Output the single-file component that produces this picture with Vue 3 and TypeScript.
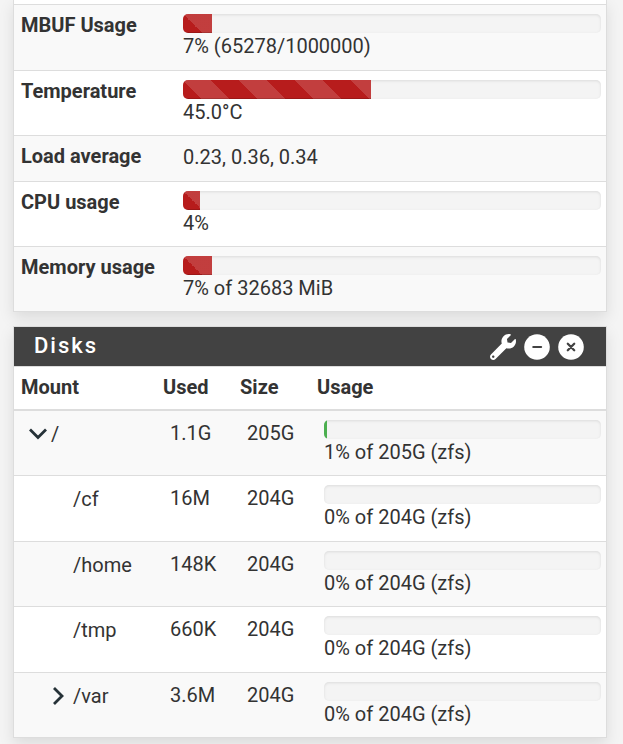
<script setup lang="ts">
import { ref, computed } from 'vue'

interface Stat {
  label: string
  text: string
  percent?: number
}

interface Mount {
  name: string
  used: string
  size: string
  percent: number
  expand?: 'open' | 'closed'
  child: boolean
}

const stats: Stat[] = [
  { label: 'MBUF Usage', text: '7% (65278/1000000)', percent: 7 },
  { label: 'Temperature', text: '45.0°C', percent: 45 },
  { label: 'Load average', text: '0.23, 0.36, 0.34' },
  { label: 'CPU usage', text: '4%', percent: 4 },
  { label: 'Memory usage', text: '7% of 32683 MiB', percent: 7 },
]

const mounts: Mount[] = [
  { name: '/', used: '1.1G', size: '205G', percent: 1, expand: 'open', child: false },
  { name: '/cf', used: '16M', size: '204G', percent: 0, child: true },
  { name: '/home', used: '148K', size: '204G', percent: 0, child: true },
  { name: '/tmp', used: '660K', size: '204G', percent: 0, child: true },
  { name: '/var', used: '3.6M', size: '204G', percent: 0, expand: 'closed', child: true },
]

const rootOpen = ref(true)
const collapsed = ref(false)
const visibleMounts = computed(() => mounts.filter((m) => rootOpen.value || !m.child))

function toggle(m: Mount) {
  if (!m.child) rootOpen.value = !rootOpen.value
}
</script>

<template>
  <main class="dashboard">
    <section class="panel system">
      <table class="grid">
        <tbody>
          <tr v-for="s in stats" :key="s.label">
            <th scope="row" class="label">{{ s.label }}</th>
            <td class="value" :class="{ plain: s.percent === undefined }">
              <div v-if="s.percent !== undefined" class="progress">
                <div class="fill striped" :style="{ width: s.percent + '%' }"></div>
              </div>
              <span>{{ s.text }}</span>
            </td>
          </tr>
        </tbody>
      </table>
    </section>

    <section class="panel disks">
      <header class="heading">
        <h2>Disks</h2>
        <div class="tools">
          <button type="button" aria-label="Settings">
            <svg viewBox="0 0 512 512">
              <path
                fill="#fff"
                d="M507.73 109.1c-2.24-9.03-13.54-12.09-20.12-5.51l-74.36 74.36-67.88-11.31-11.31-67.88 74.36-74.36c6.62-6.62 3.43-17.9-5.66-20.16-47.38-11.74-99.55.91-136.58 37.93-39.64 39.64-50.55 97.1-34.05 147.2L18.74 402.76c-24.99 24.99-24.99 65.51 0 90.5 24.99 24.99 65.51 24.99 90.5 0l213.21-213.21c50.12 16.71 107.47 5.68 147.37-34.22 37.07-37.07 49.7-89.32 37.91-136.73zM64 472c-13.25 0-24-10.75-24-24 0-13.26 10.75-24 24-24s24 10.74 24 24c0 13.25-10.75 24-24 24z"
              />
            </svg>
          </button>
          <button type="button" aria-label="Collapse" @click="collapsed = !collapsed">
            <svg viewBox="0 0 26 26">
              <circle cx="13" cy="13" r="12.8" fill="#fff" />
              <path d="M9.3 13h7.8" stroke="#424242" stroke-width="2.2" stroke-linecap="round" />
            </svg>
          </button>
          <button type="button" aria-label="Close">
            <svg viewBox="0 0 26 26">
              <circle cx="13" cy="13" r="12.8" fill="#fff" />
              <path
                d="M9.8 9.8l6.4 6.4M16.2 9.8l-6.4 6.4"
                stroke="#424242"
                stroke-width="2.3"
                stroke-linecap="round"
              />
            </svg>
          </button>
        </div>
      </header>
      <table v-if="!collapsed" class="grid">
        <colgroup>
          <col class="c-mount" />
          <col class="c-num" />
          <col class="c-num" />
          <col />
        </colgroup>
        <thead>
          <tr>
            <th scope="col">Mount</th>
            <th scope="col">Used</th>
            <th scope="col">Size</th>
            <th scope="col">Usage</th>
          </tr>
        </thead>
        <tbody>
          <tr v-for="m in visibleMounts" :key="m.name">
            <td class="mount">
              <div class="tree" :class="{ child: m.child }">
                <button
                  v-if="m.expand"
                  type="button"
                  :aria-label="'Toggle ' + m.name"
                  @click="toggle(m)"
                >
                  <svg viewBox="0 0 20 20">
                    <path
                      v-if="m.expand === 'open' && rootOpen"
                      d="M2 5.5l8 8 8-8"
                      fill="none"
                      stroke="#263238"
                      stroke-width="2.8"
                    />
                    <path
                      v-else
                      d="M6 2l8 8-8 8"
                      fill="none"
                      stroke="#263238"
                      stroke-width="2.8"
                    />
                  </svg>
                </button>
                <span v-else class="spacer"></span>
                <span>{{ m.name }}</span>
              </div>
            </td>
            <td class="num">{{ m.used }}</td>
            <td class="num">{{ m.size }}</td>
            <td class="usage">
              <div class="progress">
                <div class="fill good" :style="{ width: m.percent + '%' }"></div>
              </div>
              <span>{{ m.percent }}% of {{ m.size }} (zfs)</span>
            </td>
          </tr>
        </tbody>
      </table>
    </section>
  </main>
</template>

<style>
body {
  background: #f4f4f4;
}
</style>

<style scoped>
.dashboard {
  display: flex;
  flex-direction: column;
  gap: 14px;
  padding: 0 16px 6px 13px;
  font-family: Roboto, 'Liberation Sans', sans-serif;
  font-size: 20px;
  line-height: 26px;
  color: #333;
}

.panel {
  background: #fff;
  border: 1px solid #ddd;
  box-shadow: 0 6px 14px rgba(0, 0, 0, 0.1);
}

.system {
  border-top: 0;
  padding-top: 4px;
}

.grid {
  width: 100%;
  table-layout: fixed;
  border-collapse: separate;
  border-spacing: 0;
}

.grid th,
.grid td {
  box-sizing: border-box;
  padding: 0;
  border-top: 1px solid #ddd;
  text-align: left;
  vertical-align: top;
}

.grid th {
  font-weight: 700;
}

.grid tbody tr:nth-child(odd) {
  background: #f9f9f9;
}

.system .label {
  width: 169px;
  padding: 7px 0 12px 7px;
}

.system .value {
  height: 65px;
  padding: 9px 5px 0 0;
}

.system tr:first-child .value {
  height: 66px;
}

.system .value.plain {
  height: 46px;
  padding-top: 8px;
}

.progress {
  height: 19px;
  overflow: hidden;
  border-radius: 5px;
  background: #f4f4f4;
  box-shadow: inset 0 1px 3px rgba(0, 0, 0, 0.1);
}

.fill {
  height: 100%;
  box-shadow: inset 0 -1px 0 rgba(0, 0, 0, 0.15);
}

.striped {
  background-color: #b71c1c;
  background-image: linear-gradient(
    45deg,
    rgba(255, 255, 255, 0.15) 25%,
    transparent 25%,
    transparent 50%,
    rgba(255, 255, 255, 0.15) 50%,
    rgba(255, 255, 255, 0.15) 75%,
    transparent 75%
  );
  background-size: 56px 56px;
}

.good {
  background-color: #4caf50;
}

.heading {
  display: flex;
  align-items: center;
  justify-content: space-between;
  height: 39px;
  padding: 0 22px 0 20px;
  background: #424242;
  color: #fff;
}

.heading h2 {
  margin: 0;
  padding-bottom: 2px;
  font-size: 22px;
  font-weight: 500;
  letter-spacing: 2px;
}

.tools {
  display: flex;
  gap: 8px;
}

button {
  display: block;
  padding: 0;
  border: 0;
  background: none;
  cursor: pointer;
}

.tools button {
  width: 26px;
  height: 26px;
}

svg {
  display: block;
  width: 100%;
  height: 100%;
}

.c-mount {
  width: 24%;
}

.c-num {
  width: 13%;
}

.disks thead th {
  height: 43px;
  padding: 7px 7px 0;
}

.disks tbody td {
  height: 65px;
}

.disks tbody tr:nth-child(even) td {
  height: 66px;
}

.disks tbody tr:first-child td {
  height: 66px;
  border-top-width: 2px;
}

.disks .num {
  padding: 9px 0 0 14px;
}

.disks .usage {
  padding: 9px 5px 0 14px;
}

.disks .mount {
  padding: 10px 0 0 14px;
}

.tree {
  display: flex;
  align-items: center;
  gap: 3px;
}

.tree.child {
  padding-left: 20px;
  gap: 5px;
}

.tree button,
.spacer {
  width: 20px;
  height: 20px;
}
</style>
